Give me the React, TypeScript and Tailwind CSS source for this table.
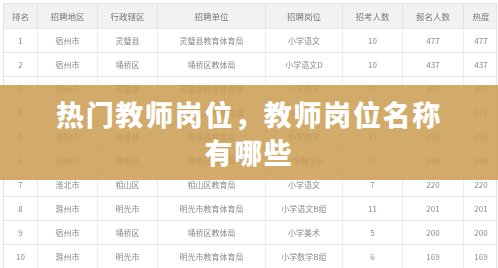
import React from "react";

const rows: string[][] = [
  ["1", "宿州市", "灵璧县", "灵璧县教育体育局", "小学语文", "10", "477", "477"],
  ["2", "宿州市", "埇桥区", "埇桥区教体局", "小学语文D", "10", "437", "437"],
  ["3", "宿州市", "灵璧县", "灵璧县教育体育局", "小学数学", "10", "357", "357"],
  ["4", "宿州市", "灵璧县", "灵璧县教育体育局", "小学语文", "10", "317", "317"],
  ["5", "阜阳市", "临泉县", "临泉县教育局", "小学数学", "15", "258", "258"],
  ["6", "宿州市", "埇桥区", "埇桥区教体局", "小学数学D", "10", "248", "248"],
  ["7", "淮北市", "相山区", "相山区教育局", "小学语文", "7", "220", "220"],
  ["8", "滁州市", "明光市", "明光市教育体育局", "小学语文B组", "11", "201", "201"],
  ["9", "宿州市", "埇桥区", "埇桥区教体局", "小学美术", "5", "200", "200"],
  ["10", "滁州市", "明光市", "明光市教育体育局", "小学数学B组", "6", "169", "169"],
];

const headers = ["排名", "招聘地区", "行政辖区", "招聘单位", "招聘岗位", "招考人数", "报名人数", "热度"];
const cols = "grid grid-cols-[34px_60px_60px_108px_77px_60px_61px_34px]";

export default function App() {
  return (
    <div
      className="relative w-[498px] h-[268px] overflow-hidden bg-white"
      style={{ fontFamily: '"Noto Sans CJK SC", "Noto Sans", sans-serif' }}
    >
      <div className="pt-[3px] pl-[3px] blur-[0.4px]">
        <div className="w-[494px] border border-[#e3e3e3]">
          <div className={`${cols} h-[24px] bg-[#f2f2f2] text-[8.5px] text-[#777]`}>
            {headers.map((h, i) => (
              <div
                key={i}
                className={`flex items-center justify-center ${i < 7 ? "border-r border-[#e3e3e3]" : ""}`}
              >
                {h}
              </div>
            ))}
          </div>
          {rows.map((r, ri) => (
            <div key={ri} className={`${cols} h-[24px] border-t border-[#e8e8e8] text-[8px] text-[#8a8a8a]`}>
              {r.map((c, ci) => (
                <div
                  key={ci}
                  className={`flex items-center justify-center ${ci < 7 ? "border-r border-[#ececec]" : ""}`}
                >
                  {c}
                </div>
              ))}
            </div>
          ))}
        </div>
      </div>
      <div className="absolute left-0 right-0 top-[85px] h-[95px] bg-[#ca9c51]/85 flex items-center justify-center px-[50px]">
        <div className="text-white text-[28px] leading-[38px] font-black tracking-[1.7px] text-center">
          热门教师岗位，教师岗位名称有哪些
        </div>
      </div>
    </div>
  );
}
